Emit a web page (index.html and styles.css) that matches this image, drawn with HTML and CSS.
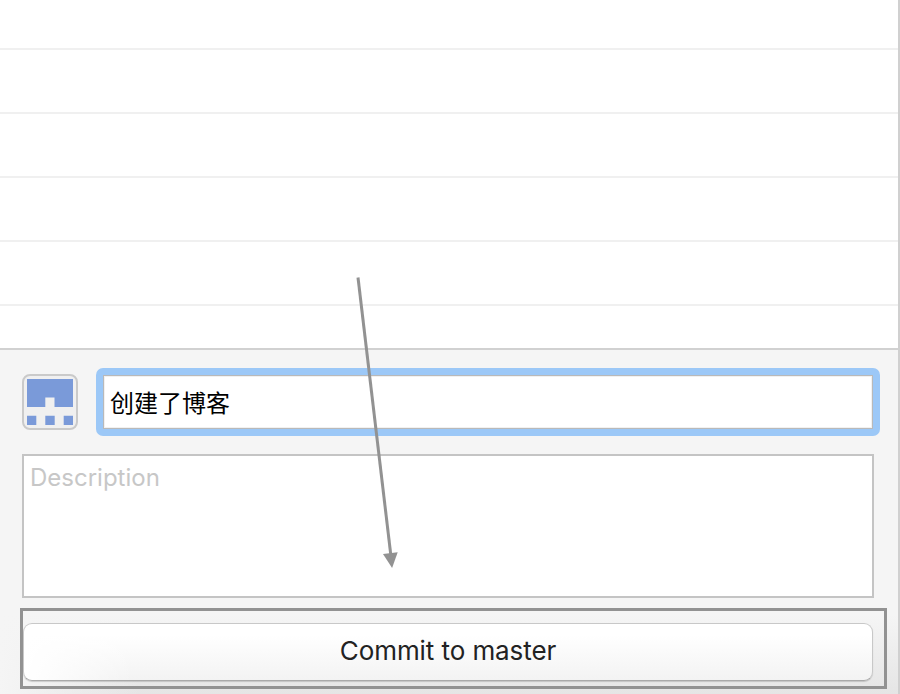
FILE: index.html
```html
<!DOCTYPE html>
<html lang="zh">
<head>
<meta charset="utf-8">
<title>Commit</title>
<link rel="stylesheet" href="styles.css">
</head>
<body>
<div class="window">
  <div class="file-list">
    <div class="row row-first"></div>
    <div class="row"></div>
    <div class="row"></div>
    <div class="row"></div>
    <div class="row"></div>
  </div>
  <div class="commit-panel">
    <div class="summary-row">
      <svg class="avatar" viewBox="0 0 56 56">
        <rect x="1" y="1" width="54" height="54" rx="7" fill="#f0f0f0" stroke="#cacaca" stroke-width="2"/>
        <path d="M5 5H51V33H32.500V23.500H23.300V33H5ZM5 41.700H14.300V51H5ZM23.300 41.700H32.700V51H23.300ZM41.700 41.700H51V51H41.700Z" fill="#7a9ad9"/>
      </svg>
      <div class="focus-ring"><div class="summary">创建了博客</div></div>
    </div>
    <div class="description"><span class="placeholder">Description</span></div>
    <div class="commit-button"><span class="commit-label">Commit to master</span></div>
  </div>
  <div class="highlight"></div>
  <svg class="arrow" viewBox="0 0 60 300">
    <path d="M18 7.500L50.800 285" fill="none" stroke="#929292" stroke-width="3"/>
    <path d="M43 284L57.700 282.300L52.100 298Z" fill="#929292"/>
  </svg>
</div>
</body>
</html>
```

FILE: styles.css
```css
* { box-sizing: border-box; }
body { margin: 0; }
.window {
  position: relative;
  width: 900px;
  height: 694px;
  overflow: hidden;
  display: flex;
  flex-direction: column;
  border-right: 2px solid #d0d0d0;
  background: #fff;
  font-family: Inter, "Noto Sans CJK SC", sans-serif;
}
.file-list {
  height: 350px;
  flex: none;
  border-bottom: 2px solid #d1d1d1;
}
.row { height: 64px; border-bottom: 2px solid #f0f0f0; }
.row-first { height: 50px; }
.commit-panel {
  flex: 1;
  padding: 18px 18px 0 22px;
  background:
    linear-gradient(to right, #f5f5f5 0, rgba(245, 245, 245, 0) 140px) no-repeat,
    linear-gradient(to bottom, #f5f5f5 265px, #e5e5e5 344px);
}
.summary-row { display: flex; align-items: flex-start; gap: 18px; height: 68px; }
.avatar { width: 56px; height: 56px; margin-top: 6px; flex: none; }
.focus-ring {
  flex: 1;
  height: 68px;
  padding: 7px;
  border-radius: 7px;
  background: #9cc8f7;
}
.summary {
  height: 54px;
  padding-left: 6px;
  border: 1px solid #b9b9b9;
  background: #fff;
  box-shadow: inset 0 0 0 1px #f1f1f1;
  font: 24px/52px "Noto Sans CJK SC", sans-serif;
  color: #000;
}
.description {
  width: 852px;
  height: 144px;
  margin-top: 18px;
  padding: 6px;
  border: 2px solid #c4c4c4;
  background: #fff;
  font-size: 24px;
  line-height: 32px;
  color: #c7c7c7;
}
.commit-button {
  width: 850px;
  height: 58px;
  margin: 25px 0 0 1px;
  padding-bottom: 2px;
  display: flex;
  align-items: center;
  justify-content: center;
  border: 1px solid #c8c8c8;
  border-bottom-color: #a9a9a9;
  border-radius: 9px;
  background:
    linear-gradient(to right, #fff, rgba(255, 255, 255, 0) 110px),
    linear-gradient(#fff 20%, #f3f3f3);
  box-shadow: 0 1px 1px rgba(0, 0, 0, .16);
  color: #222;
  font-size: 26px;
  line-height: 32px;
  letter-spacing: -0.08px;
}
.highlight {
  position: absolute;
  left: 20px;
  top: 608px;
  width: 867px;
  height: 81px;
  border: 3px solid #929292;
}
.arrow { position: absolute; left: 340px; top: 270px; width: 60px; height: 300px; }
```
